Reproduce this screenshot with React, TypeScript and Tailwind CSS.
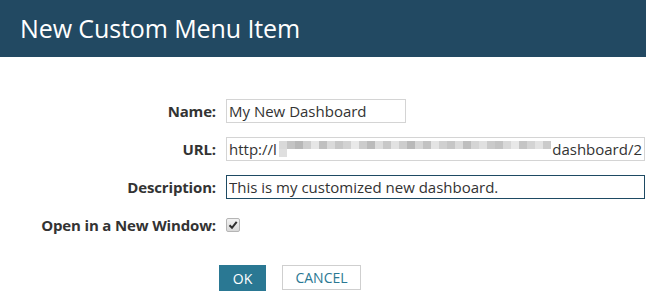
import React from 'react';

const font = { fontFamily: '"Open Sans", "Noto Sans", Arial, sans-serif' };

// pixelated redaction in the URL field
const mosaic = [
  '#d9d9d9', '#c4c4c4', '#b8b8b8', '#cfcfcf', '#e6e6e6', '#c0c0c0', '#dadada', '#c7c7c7', '#d2d2d2', '#e9e9e9',
  '#cccccc', '#bbbbbb', '#dddddd', '#c8c8c8', '#e2e2e2', '#cdcdcd', '#b9b9b9', '#d6d6d6', '#c2c2c2', '#e4e4e4',
  '#d0d0d0', '#c6c6c6', '#dbdbdb', '#bebebe', '#d5d5d5', '#e0e0e0', '#cacaca', '#c3c3c3', '#d8d8d8', '#e8e8e8',
  '#c5c5c5', '#d4d4d4', '#e3e3e3', '#cbcbcb', '#dfdfdf',
];

const Label: React.FC<{ children: React.ReactNode }> = ({ children }) => (
  <div className="text-right text-[15px] font-bold text-[#333333] leading-6 tracking-[-0.15px]">{children}</div>
);

export default function App() {
  return (
    <div className="w-[646px] h-[299px] bg-white overflow-hidden" style={font}>
      <div className="h-[57px] bg-[#224962] flex items-center px-5">
        <h1 className="text-white text-[25px] font-normal tracking-[-0.1px]">New Custom Menu Item</h1>
      </div>

      <div className="grid grid-cols-[216px_1fr] gap-x-[10px] gap-y-[14px] pt-[42px] pr-px">
        <Label>Name:</Label>
        <input
          readOnly
          value="My New Dashboard"
          className="w-[180px] h-6 border border-[#d4d4d4] px-[2px] text-[15px] text-[#333333] outline-none"
          style={font}
        />

        <Label>URL:</Label>
        <div className="h-6 border border-[#d4d4d4] px-[2px] text-[15px] text-[#333333] leading-[22px] flex items-center overflow-hidden whitespace-nowrap">
          <span>http://l</span>
          <span className="flex flex-wrap w-[280px] h-4 ml-[2px]">
            {mosaic.map((c, i) => (
              <span key={i} className="w-2 h-2" style={{ backgroundColor: c }} />
            ))}
          </span>
          <span>dashboard/2</span>
        </div>

        <Label>Description:</Label>
        <input
          readOnly
          value="This is my customized new dashboard."
          className="h-6 border border-[#1e4a63] px-[2px] text-[15px] text-[#333333] outline-none"
          style={font}
        />

        <Label>Open in a New Window:</Label>
        <div className="h-6 flex items-center">
          <span className="w-[14px] h-[14px] rounded-[2px] border border-[#b5b5b5] bg-gradient-to-b from-[#f2f2f2] to-[#d9d9d9] flex items-center justify-center">
            <svg width="10" height="10" viewBox="0 0 10 10">
              <path d="M1.5 5.2 L4 7.8 L8.7 1.8" fill="none" stroke="#2e2e2e" strokeWidth="2" />
            </svg>
          </span>
        </div>
      </div>

      <div className="flex gap-4 mt-7 ml-[219px]">
        <button className="w-[47px] h-[26px] bg-[#2a7893] text-white text-[14px]" style={font}>
          OK
        </button>
        <button
          className="w-[79px] h-[25px] border border-[#cfcfcf] bg-white text-[#2a7893] text-[14px]"
          style={font}
        >
          CANCEL
        </button>
      </div>
    </div>
  );
}
